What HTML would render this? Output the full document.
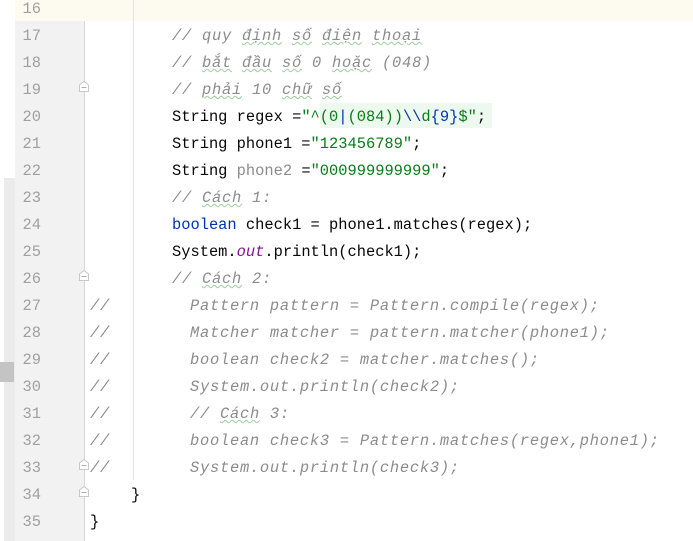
<!DOCTYPE html>
<html><head><meta charset="utf-8"><style>
body{margin:0;width:693px;height:541px;overflow:hidden;background:#fff;position:relative;font-family:"Liberation Mono","DejaVu Sans Mono",monospace;font-size:15.4px;}
.strip{position:absolute;left:4px;top:178px;width:11px;height:363px;background:#ebebeb;}
.mark{position:absolute;left:0;top:362px;width:14px;height:20px;background:#c4c4c4;}
.gut{position:absolute;left:15px;top:0;width:69px;height:541px;background:#f2f2f2;border-right:1px solid #d8d8d8;}
.hl{position:absolute;left:15px;top:-6px;width:678px;height:27px;background:#fdfbf0;}
.ln{position:absolute;left:15px;width:26px;text-align:right;color:#a0a0a0;line-height:27px;margin-top:2px;}
.c{position:absolute;line-height:27px;white-space:pre;color:#080808;margin-top:2px;}
.cm{color:#8c8c8c;font-style:italic;letter-spacing:0.76px;}
.s{color:#067d17;}
.b{color:#0037a6;}
.k{color:#0033b3;}
.o{color:#871094;font-style:italic;}
.g{color:#8c8c8c;}
.w{text-decoration:underline wavy #9ccf9c;text-decoration-thickness:1px;}
.guide{position:absolute;left:133px;top:0;width:1px;height:480px;background:#e4e4e4;}
.rx{position:absolute;left:320px;top:103px;width:172px;height:25px;background:#edf8ee;}
.fold{position:absolute;left:79px;width:10px;height:11px;}
</style></head><body>
<div class="strip"></div><div class="mark"></div>
<div class="gut"></div>
<div class="hl"></div>
<div class="guide"></div>
<div class="rx"></div>
<div class="ln" style="top:-6px">16</div>
<div class="ln" style="top:21px">17</div>
<div class="ln" style="top:48px">18</div>
<div class="ln" style="top:75px">19</div>
<div class="ln" style="top:102px">20</div>
<div class="ln" style="top:129px">21</div>
<div class="ln" style="top:156px">22</div>
<div class="ln" style="top:183px">23</div>
<div class="ln" style="top:210px">24</div>
<div class="ln" style="top:237px">25</div>
<div class="ln" style="top:264px">26</div>
<div class="ln" style="top:291px">27</div>
<div class="ln" style="top:318px">28</div>
<div class="ln" style="top:345px">29</div>
<div class="ln" style="top:372px">30</div>
<div class="ln" style="top:399px">31</div>
<div class="ln" style="top:426px">32</div>
<div class="ln" style="top:453px">33</div>
<div class="ln" style="top:480px">34</div>
<div class="ln" style="top:507px">35</div>

<svg class="fold" style="top:81px" viewBox="0 0 10 11"><path d="M0.5 10.5V4L5 0.5 9.5 4V10.5Z" fill="#fff" stroke="#c8c8c8"/><path d="M2.5 6.5H7.5" stroke="#b0b0b0"/></svg>
<svg class="fold" style="top:270px" viewBox="0 0 10 11"><path d="M0.5 10.5V4L5 0.5 9.5 4V10.5Z" fill="#fff" stroke="#c8c8c8"/><path d="M2.5 6.5H7.5" stroke="#b0b0b0"/></svg>
<svg class="fold" style="top:459px" viewBox="0 0 10 11"><path d="M0.5 10.5V4L5 0.5 9.5 4V10.5Z" fill="#fff" stroke="#c8c8c8"/><path d="M2.5 6.5H7.5" stroke="#b0b0b0"/></svg>
<svg class="fold" style="top:486px" viewBox="0 0 10 11"><path d="M0.5 10.5V4L5 0.5 9.5 4V10.5Z" fill="#fff" stroke="#c8c8c8"/><path d="M2.5 6.5H7.5" stroke="#b0b0b0"/></svg>

<div class="c cm" style="left:172px;top:21px">// quy <span class="w">định</span> <span class="w">số</span> <span class="w">điện</span> <span class="w">thoại</span></div>
<div class="c cm" style="left:172px;top:48px">// <span class="w">bắt</span> <span class="w">đầu</span> <span class="w">số</span> 0 <span class="w">hoặc</span> (048)</div>
<div class="c cm" style="left:172px;top:75px">// <span class="w">phải</span> 10 <span class="w">chữ</span> <span class="w">số</span></div>
<div class="c" style="left:172px;top:102px">String regex =<span class="s">"^(0</span><span class="b">|</span><span class="s">(084))</span><span class="b">\\</span><span class="s">d</span><span class="b">{9}</span><span class="s">$"</span>;</div>
<div class="c" style="left:172px;top:129px">String phone1 =<span class="s">"123456789"</span>;</div>
<div class="c" style="left:172px;top:156px">String <span class="g">phone2</span> =<span class="s">"000999999999"</span>;</div>
<div class="c cm" style="left:172px;top:183px">// <span class="w">Cách</span> 1:</div>
<div class="c" style="left:172px;top:210px"><span class="k">boolean</span> check1 = phone1.matches(regex);</div>
<div class="c" style="left:172px;top:237px">System.<span class="o">out</span>.println(check1);</div>
<div class="c cm" style="left:172px;top:264px">// <span class="w">Cách</span> 2:</div>
<div class="c cm" style="left:90px;top:291px">//        Pattern pattern = Pattern.compile(regex);</div>
<div class="c cm" style="left:90px;top:318px">//        Matcher matcher = pattern.matcher(phone1);</div>
<div class="c cm" style="left:90px;top:345px">//        boolean check2 = matcher.matches();</div>
<div class="c cm" style="left:90px;top:372px">//        System.out.println(check2);</div>
<div class="c cm" style="left:90px;top:399px">//        // <span class="w">Cách</span> 3:</div>
<div class="c cm" style="left:90px;top:426px">//        boolean check3 = Pattern.matches(regex,phone1);</div>
<div class="c cm" style="left:90px;top:453px">//        System.out.println(check3);</div>
<div class="c" style="left:131px;top:480px">}</div>
<div class="c" style="left:90px;top:507px">}</div>
</body></html>
